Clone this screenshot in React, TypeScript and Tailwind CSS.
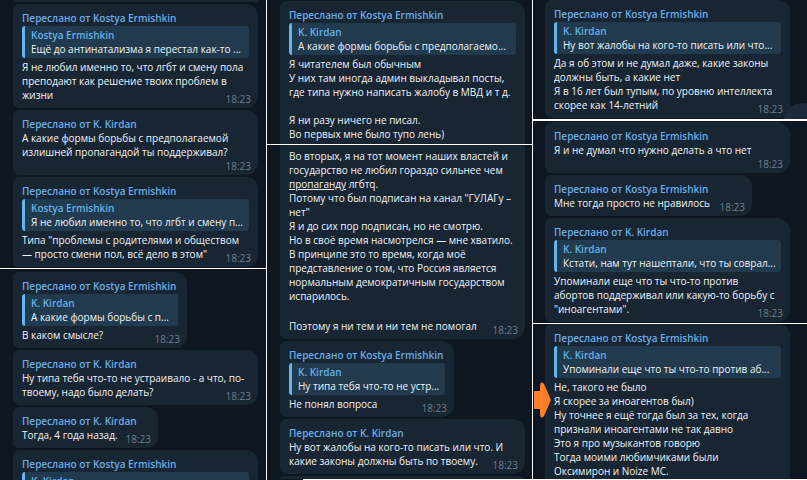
import type { ReactNode } from 'react';

type BubbleProps = {
  from?: string;
  quote?: { name: string; text: string };
  width?: string;
  shape?: string;
  roomy?: boolean;
  time?: boolean;
  children?: ReactNode;
};

function Bubble({ from, quote, width = 'w-[245px]', shape = 'rounded-md rounded-tr-xl rounded-br-xl pt-[7px]', roomy, time = true, children }: BubbleProps) {
  return (
    <article className={`relative shrink-0 bg-[#182533] px-[9px] ${roomy ? 'pb-4' : 'pb-[6px]'} ${width} ${shape}`}>
      {from && <h2 className="font-semibold whitespace-nowrap text-[#69aee9]">Переслано от {from}</h2>}
      {quote && (
        <blockquote className="mt-px mb-[2px] rounded-[3px] border-l-[3px] border-[#64b5ef] bg-[#213a4e] py-[2px] pl-[6px]">
          <cite className="block font-semibold text-[#61b2e8] not-italic">{quote.name}</cite>
          <p className="whitespace-nowrap">{quote.text}</p>
        </blockquote>
      )}
      <div className="whitespace-pre">{children}</div>
      {time && <time className="absolute right-[7px] bottom-[2px] text-[#6d7f8f]">18:23</time>}
    </article>
  );
}

const KOSTYA = 'Kostya Ermishkin';
const KIRDAN = 'K. Kirdan';

export default function App() {
  return (
    <main className="grid h-screen grid-cols-[267px_266px_minmax(0,1fr)] overflow-hidden bg-[#0e1621] font-['Open_Sans','Noto_Sans',sans-serif] text-[10px] leading-[14px] text-[#f0f4f7]">
      <div className="flex min-h-0 flex-col overflow-hidden border-r border-white">
        <section className="flex h-[269px] shrink-0 flex-col gap-[2px] overflow-hidden border-b border-white pl-[13px]">
          <div className="h-[2px] w-[245px] shrink-0 rounded-b-md bg-[#182533]" />
          <Bubble from={KOSTYA} quote={{ name: KOSTYA, text: 'Ещё до антинатализма я перестал как-то ...' }}>
            {'Я не любил именно то, что лгбт и смену пола\nпреподают как решение твоих проблем в\nжизни'}
          </Bubble>
          <Bubble from={KIRDAN} roomy>{'А какие формы борьбы с предполагаемой\nизлишней пропагандой ты поддерживал?'}</Bubble>
          <Bubble from={KOSTYA} quote={{ name: KOSTYA, text: 'Я не любил именно то, что лгбт и смену п...' }}>
            {'Типа "проблемы с родителями и обществом\n— просто смени пол, всё дело в этом"'}
          </Bubble>
        </section>
        <section className="flex flex-col gap-[2px] pt-[3px] pl-[13px]">
          <Bubble width="w-[174px]" from={KOSTYA} quote={{ name: KIRDAN, text: 'А какие формы борьбы с п...' }}>В каком смысле?</Bubble>
          <Bubble from={KIRDAN}>{'Ну типа тебя что-то не устраивало - а что, по-\nтвоему, надо было делать?'}</Bubble>
          <Bubble width="w-[145px]" from={KIRDAN}>Тогда, 4 года назад.</Bubble>
          <Bubble from={KOSTYA} time={false} quote={{ name: KIRDAN, text: '' }} />
        </section>
      </div>

      <div className="flex min-h-0 flex-col overflow-hidden border-r border-white">
        <section className="h-[145px] shrink-0 overflow-hidden border-b border-white pt-px pl-[13px]">
          <Bubble shape="rounded-tl-md rounded-tr-xl pt-[7px] h-full" time={false} from={KOSTYA} quote={{ name: KIRDAN, text: 'А какие формы борьбы с предполагаемо...' }}>
            {'Я читателем был обычным\nУ них там иногда админ выкладывал посты,\nгде типа нужно написать жалобу в МВД и т д.\n\nЯ ни разу ничего не писал.\nВо первых мне было тупо лень)'}
          </Bubble>
        </section>
        <section className="flex min-h-0 flex-1 flex-col gap-[2px] overflow-hidden pl-[13px]">
          <Bubble shape="rounded-b-md rounded-br-xl pt-1">
            <p>{'Во вторых, я на тот момент наших властей и\nгосударство не любил гораздо сильнее чем\n'}<u>пропаганду</u>{' лгбтq.'}</p>
            <p>{'Потому что был подписан на канал "ГУЛАГу –\nнет"'}</p>
            <p>Я и до сих пор подписан, но не смотрю.</p>
            <p>Но в своё время насмотрелся — мне хватило.</p>
            <p className="mb-4">{'В принципе это то время, когда моё\nпредставление о том, что Россия является\nнормальным демократичным государством\nиспарилось.'}</p>
            <p>Поэтому я ни тем и ни тем не помогал</p>
          </Bubble>
          <Bubble width="w-[174px]" from={KOSTYA} quote={{ name: KIRDAN, text: 'Ну типа тебя что-то не устр...' }}>Не понял вопроса</Bubble>
          <Bubble from={KIRDAN}>{'Ну вот жалобы на кого-то писать или что. И\nкакие законы должны быть по твоему.'}</Bubble>
          <Bubble time={false} />
        </section>
        <div className="ml-9 h-px bg-white" />
      </div>

      <div className="flex min-h-0 flex-col overflow-hidden border-b border-white">
        <section className="relative h-[121px] shrink-0 overflow-hidden border-b-2 border-white pl-3">
          <Bubble from={KOSTYA} quote={{ name: KIRDAN, text: 'Ну вот жалобы на кого-то писать или что...' }}>
            {'Да я об этом и не думал даже, какие законы\nдолжны быть, а какие нет\nЯ в 16 лет был тупым, по уровню интеллекта\nскорее как 14-летний'}
          </Bubble>
          <span className="absolute -right-4 -bottom-6 size-10 rounded-full bg-[#1d2a3b]" />
        </section>
        <section className="flex h-[203px] shrink-0 flex-col gap-[2px] overflow-hidden border-b border-white pt-px pl-3">
          <Bubble from={KOSTYA} roomy>Я и не думал что нужно делать а что нет</Bubble>
          <Bubble width="w-[207px]" from={KOSTYA}>Мне тогда просто не нравилось</Bubble>
          <Bubble from={KIRDAN} quote={{ name: KIRDAN, text: 'Кстати, нам тут нашептали, что ты соврал...' }}>
            {'Упоминали еще что ты что-то против\nабортов поддерживал или какую-то борьбу с\n"иноагентами".'}
          </Bubble>
        </section>
        <section className="relative grow pl-3">
          <Bubble shape="rounded-tl-md rounded-tr-xl pt-[7px] h-full" time={false} from={KOSTYA} quote={{ name: KIRDAN, text: 'Упоминали еще что ты что-то против аб...' }}>
            {'Не, такого не было\nЯ скорее за иноагентов был)\nНу точнее я ещё тогда был за тех, когда\nпризнали иноагентами не так давно\nЭто я про музыкантов говорю\nТогда моими любимчиками были\nОксимирон и Noize MC.'}
          </Bubble>
          <svg className="absolute top-[58px] left-px h-[36px] w-[17px]" viewBox="0 0 17 36" fill="#ff7f27" aria-hidden="true">
            <path d="M0 9h6V3q1-5 4-1l7 16-7 16q-3 4-4-1v-6H0z" />
          </svg>
        </section>
      </div>
    </main>
  );
}
